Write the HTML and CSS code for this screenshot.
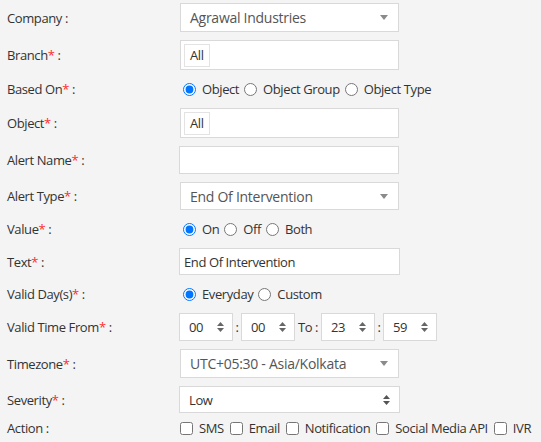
FILE: index.html
```html
<!DOCTYPE html>
<html>
<head>
<meta charset="utf-8">
<link rel="stylesheet" href="styles.css">
</head>
<body>
<form class="form">
  <div class="row h29">
    <div class="label">Company :</div>
    <div class="field"><div class="select w219"><span>Agrawal Industries</span><span class="caret"></span></div></div>
  </div>
  <div class="row h30">
    <div class="label">Branch<span class="req">*</span> :</div>
    <div class="field"><div class="multi w219"><span class="chip">All</span></div></div>
  </div>
  <div class="row h22">
    <div class="label">Based On<span class="req">*</span> :</div>
    <div class="field opts">
      <label class="opt"><input type="radio" name="based" checked><span>Object</span></label>
      <label class="opt"><input type="radio" name="based"><span>Object Group</span></label>
      <label class="opt"><input type="radio" name="based"><span>Object Type</span></label>
    </div>
  </div>
  <div class="row h30">
    <div class="label">Object<span class="req">*</span> :</div>
    <div class="field"><div class="multi w219"><span class="chip">All</span></div></div>
  </div>
  <div class="row h28">
    <div class="label">Alert Name<span class="req">*</span> :</div>
    <div class="field"><div class="input w220"></div></div>
  </div>
  <div class="row h28">
    <div class="label">Alert Type<span class="req">*</span> :</div>
    <div class="field"><div class="select w219"><span>End Of Intervention</span><span class="caret"></span></div></div>
  </div>
  <div class="row h22">
    <div class="label">Value<span class="req">*</span> :</div>
    <div class="field opts">
      <label class="opt"><input type="radio" name="val" checked><span>On</span></label>
      <label class="opt"><input type="radio" name="val"><span>Off</span></label>
      <label class="opt"><input type="radio" name="val"><span>Both</span></label>
    </div>
  </div>
  <div class="row h27">
    <div class="label">Text<span class="req">*</span> :</div>
    <div class="field"><div class="input w221 dark">End Of Intervention</div></div>
  </div>
  <div class="row h22">
    <div class="label">Valid Day(s)<span class="req">*</span> :</div>
    <div class="field opts">
      <label class="opt"><input type="radio" name="day" checked><span>Everyday</span></label>
      <label class="opt"><input type="radio" name="day"><span>Custom</span></label>
    </div>
  </div>
  <div class="row h28">
    <div class="label">Valid Time From<span class="req">*</span> :</div>
    <div class="field times">
      <div class="spin"><span>00</span><svg class="updown" width="7" height="10" viewBox="0 0 7 10"><path d="M3.5 0 7 4H0z M0 6h7L3.5 10z" fill="#666"/></svg></div>
      <span class="sep">:</span>
      <div class="spin"><span>00</span><svg class="updown" width="7" height="10" viewBox="0 0 7 10"><path d="M3.5 0 7 4H0z M0 6h7L3.5 10z" fill="#666"/></svg></div>
      <span class="sep to">To :</span>
      <div class="spin"><span>23</span><svg class="updown" width="7" height="10" viewBox="0 0 7 10"><path d="M3.5 0 7 4H0z M0 6h7L3.5 10z" fill="#666"/></svg></div>
      <span class="sep">:</span>
      <div class="spin"><span>59</span><svg class="updown" width="7" height="10" viewBox="0 0 7 10"><path d="M3.5 0 7 4H0z M0 6h7L3.5 10z" fill="#666"/></svg></div>
    </div>
  </div>
  <div class="row h29">
    <div class="label">Timezone<span class="req">*</span> :</div>
    <div class="field"><div class="select w219"><span>UTC+05:30 - Asia/Kolkata</span><span class="caret"></span></div></div>
  </div>
  <div class="row h27">
    <div class="label">Severity<span class="req">*</span> :</div>
    <div class="field"><div class="select native w221"><span>Low</span><svg class="updown" width="7" height="10" viewBox="0 0 7 10"><path d="M3.5 0 7 4H0z M0 6h7L3.5 10z" fill="#555"/></svg></div></div>
  </div>
  <div class="row h22 last">
    <div class="label">Action :</div>
    <div class="field checks">
      <label class="chk"><input type="checkbox"><span>SMS</span></label>
      <label class="chk"><input type="checkbox"><span>Email</span></label>
      <label class="chk"><input type="checkbox"><span>Notification</span></label>
      <label class="chk"><input type="checkbox"><span>Social Media API</span></label>
      <label class="chk"><input type="checkbox"><span>IVR</span></label>
    </div>
  </div>
</form>
</body>
</html>
```

FILE: styles.css
```css
html, body {
  margin: 0;
  padding: 0;
  background: #f4f4f4;
}
body {
  font-family: "Open Sans", "Noto Sans", sans-serif;
  font-size: 13px;
  letter-spacing: -0.4px;
  color: #333;
}
.form {
  display: flex;
  flex-direction: column;
  gap: 8px;
  padding: 3px 0 0 7px;
}
.row {
  display: flex;
  align-items: center;
}
.h22 { height: 22px; }
.h27 { height: 27px; }
.h28 { height: 28px; }
.h29 { height: 29px; }
.h30 { height: 30px; }
.row.last { margin-top: -4px; }
.label {
  width: 172px;
  flex: none;
  color: #333;
  white-space: nowrap;
}
.req { color: #ff2b2b; }
.field {
  height: 100%;
  display: flex;
  align-items: center;
  white-space: nowrap;
}
.w219 { width: 219px; }
.w220 { width: 220px; }
.w221 { width: 221px; }
.select, .multi, .input, .spin {
  box-sizing: border-box;
  height: 100%;
  background: #fff;
  border: 1px solid #d9d9d9;
  display: flex;
  align-items: center;
}
.select {
  margin-left: 1px;
  padding: 0 9px 0 9px;
  justify-content: space-between;
  color: #555;
  font-size: 14px;
  letter-spacing: -0.27px;
}
.select.native {
  margin-left: 0;
  padding-left: 9px;
  padding-right: 9px;
  color: #333;
  font-size: 13px;
  letter-spacing: -0.4px;
}
.caret {
  width: 0;
  height: 0;
  border-left: 4px solid transparent;
  border-right: 4px solid transparent;
  border-top: 5px solid #8a8a8a;
  margin-right: 1px;
}
.multi {
  margin-left: 1px;
  padding: 0 3px;
}
.chip {
  box-sizing: border-box;
  height: 23px;
  border: 1px solid #e3e3e3;
  padding: 0 5px;
  line-height: 21px;
  color: #333;
}
.input {
  padding: 0 4px;
  color: #333;
}
.opt, .chk {
  display: flex;
  align-items: center;
  color: #333;
}
.opt input, .chk input {
  margin: 0;
  width: 13px;
  height: 13px;
  accent-color: #0075ff;
}
.opt input { margin-left: 4px; margin-right: 6px; }
.opt + .opt input { margin-left: 5px; }
.chk input { margin-left: 1px; margin-right: 6px; }
.chk + .chk input { margin-left: 6px; }
.spin {
  width: 54px;
  justify-content: space-between;
  padding: 0 8px 0 9px;
  color: #333;
}
.sep {
  width: 8px;
  text-align: center;
  color: #333;
}
.sep.to {
  width: 26px;
}
.updown { display: block; }
```
